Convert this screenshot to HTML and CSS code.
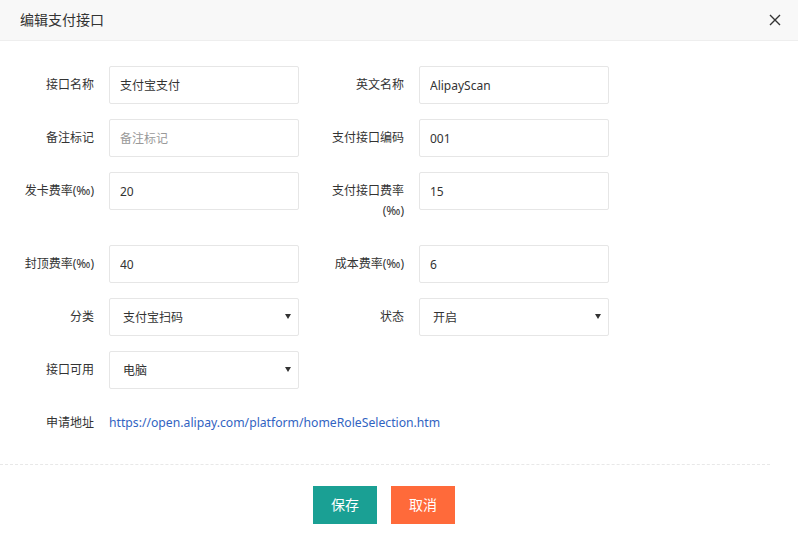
FILE: index.html
```html
<!DOCTYPE html>
<html lang="zh-CN">
<head>
<meta charset="utf-8">
<title>编辑支付接口</title>
<link rel="stylesheet" href="styles.css">
</head>
<body>
<div class="dialog">
  <div class="dialog-head">
    <span class="dialog-title">编辑支付接口</span>
    <span class="dialog-close" aria-label="关闭">
      <svg width="12" height="12" viewBox="0 0 12 12"><path d="M1 1 L11 11 M11 1 L1 11" stroke="#333" stroke-width="1.4" fill="none"/></svg>
    </span>
  </div>
  <form class="form">
    <div class="form-row">
      <div class="field"><label class="label">接口名称</label><input class="input" value="支付宝支付"></div>
      <div class="field"><label class="label">英文名称</label><input class="input" value="AlipayScan"></div>
    </div>
    <div class="form-row">
      <div class="field"><label class="label">备注标记</label><input class="input" placeholder="备注标记"></div>
      <div class="field"><label class="label">支付接口编码</label><input class="input" value="001"></div>
    </div>
    <div class="form-row">
      <div class="field"><label class="label">发卡费率(‰)</label><input class="input" value="20"></div>
      <div class="field"><label class="label">支付接口费率(‰)</label><input class="input" value="15"></div>
    </div>
    <div class="form-row">
      <div class="field"><label class="label">封顶费率(‰)</label><input class="input" value="40"></div>
      <div class="field"><label class="label">成本费率(‰)</label><input class="input" value="6"></div>
    </div>
    <div class="form-row">
      <div class="field"><label class="label">分类</label><div class="select"><span>支付宝扫码</span><i class="caret"></i></div></div>
      <div class="field"><label class="label">状态</label><div class="select"><span>开启</span><i class="caret"></i></div></div>
    </div>
    <div class="form-row">
      <div class="field"><label class="label">接口可用</label><div class="select"><span>电脑</span><i class="caret"></i></div></div>
    </div>
    <div class="form-row last">
      <div class="field"><label class="label">申请地址</label><div class="link-box"><a class="link" href="#">https://open.alipay.com/platform/homeRoleSelection.htm</a></div></div>
    </div>
    <div class="form-foot">
      <button type="button" class="btn btn-save">保存</button>
      <button type="button" class="btn btn-cancel">取消</button>
    </div>
  </form>
</div>
</body>
</html>
```

FILE: styles.css
```css
* { box-sizing: border-box; }
html, body { margin: 0; padding: 0; background: #fff; }
body {
  font-family: "Noto Sans", "Noto Sans CJK SC", sans-serif;
  font-size: 12px;
  color: #333;
  width: 798px;
  height: 557px;
  overflow: hidden;
}
.dialog-head {
  height: 41px;
  background: #f8f8f8;
  border-bottom: 1px solid #eee;
  display: flex;
  align-items: center;
  justify-content: space-between;
  padding: 0 17px 0 20px;
}
.dialog-title { font-size: 14px; color: #333; line-height: 20px; }
.dialog-close { display: flex; width: 12px; height: 12px; }
.form { width: 770px; padding-top: 25px; margin: 0; }
.form-row { display: flex; margin-bottom: 15px; }
.form-row.last { margin-bottom: 0; }
.field { display: flex; align-items: flex-start; }
.field + .field { margin-left: 10px; }
.label {
  width: 110px;
  padding: 9px 15px;
  line-height: 20px;
  text-align: right;
  color: #333;
}
.field:first-child .label { width: 109px; }
.input, .select {
  width: 190px;
  height: 38px;
  border: 1px solid #e6e6e6;
  border-radius: 2px;
  background: #fff;
  font-family: inherit;
  font-size: 12px;
  color: #333;
  padding: 0 10px;
  outline: none;
  margin: 0;
}
.input::placeholder { color: #999; }
.select { display: flex; align-items: center; justify-content: space-between; padding: 0 7px 0 13px; }
.caret {
  width: 0; height: 0;
  border-left: 3px solid transparent;
  border-right: 3px solid transparent;
  border-top: 5px solid #333;
  margin-top: -2px;
}
.link-box { padding: 9px 0; line-height: 20px; }
.link { color: #3163c2; text-decoration: none; font-size: 12.2px; }
.form-foot {
  margin-top: 22px;
  border-top: 1px dashed #e8e8e8;
  padding: 21px 2px 0 0;
  display: flex;
  justify-content: center;
  gap: 14px;
}
.btn {
  width: 64px;
  height: 38px;
  padding: 0;
  border: 0;
  border-radius: 0;
  font-family: inherit;
  font-size: 14px;
  color: #fff;
  line-height: 38px;
  text-align: center;
  cursor: pointer;
}
.btn-save { background: #1aa094; }
.btn-cancel { background: #ff6a3a; }
```
